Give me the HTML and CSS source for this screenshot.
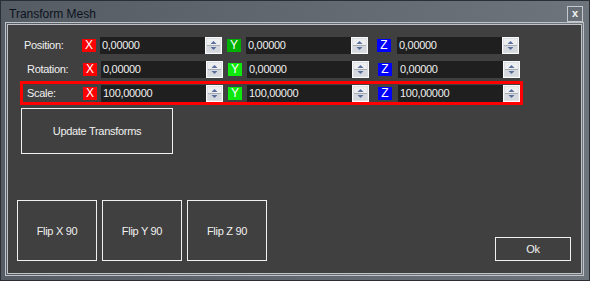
FILE: index.html
```html
<!DOCTYPE html>
<html lang="en">
<head>
    <meta charset="UTF-8">
    <title>Transform Mesh</title>
    <link rel="stylesheet" href="styles.css">
</head>
<body>
    <svg width="0" height="0" class="defs">
        <symbol id="spin" viewBox="0 0 17 17">
            <rect x="0.5" y="0.5" width="16" height="16" fill="#dcdfe3" stroke="#fafafa"/>
            <rect x="2" y="2" width="13" height="6" fill="#eceef0"/>
            <rect x="2" y="9" width="13" height="6" fill="#d5d9de"/>
            <line x1="2" y1="8.5" x2="15" y2="8.5" stroke="#a9aeb5"/>
            <path d="M8.5 4 L11.5 7 H5.5 Z" fill="#5b6f9f"/>
            <path d="M5.5 10 H11.5 L8.5 13 Z" fill="#5b6f9f"/>
        </symbol>
    </svg>
    <div class="window">
        <div class="titlebar">
            <span class="title">Transform Mesh</span>
            <span class="close">x</span>
        </div>
        <div class="frame">
            <div class="client">
                <div class="rows">
                    <div class="row first">
                        <span class="label">Position:</span>
                        <span class="axis x">X</span>
                        <div class="field">0,00000</div>
                        <svg class="spin"><use href="#spin"/></svg>
                        <span class="axis y">Y</span>
                        <div class="field">0,00000</div>
                        <svg class="spin"><use href="#spin"/></svg>
                        <span class="axis z">Z</span>
                        <div class="field">0,00000</div>
                        <svg class="spin"><use href="#spin"/></svg>
                    </div>
                    <div class="row">
                        <span class="label">Rotation:</span>
                        <span class="axis x">X</span>
                        <div class="field">0,00000</div>
                        <svg class="spin"><use href="#spin"/></svg>
                        <span class="axis y">Y</span>
                        <div class="field">0,00000</div>
                        <svg class="spin"><use href="#spin"/></svg>
                        <span class="axis z">Z</span>
                        <div class="field">0,00000</div>
                        <svg class="spin"><use href="#spin"/></svg>
                    </div>
                    <div class="row selected">
                        <span class="label">Scale:</span>
                        <span class="axis x">X</span>
                        <div class="field">100,00000</div>
                        <svg class="spin"><use href="#spin"/></svg>
                        <span class="axis y">Y</span>
                        <div class="field">100,00000</div>
                        <svg class="spin"><use href="#spin"/></svg>
                        <span class="axis z">Z</span>
                        <div class="field">100,00000</div>
                        <svg class="spin"><use href="#spin"/></svg>
                    </div>
                </div>
                <button class="btn update">Update Transforms</button>
                <div class="bottom">
                    <div class="flips">
                        <button class="btn flip">Flip X 90</button>
                        <button class="btn flip">Flip Y 90</button>
                        <button class="btn flip">Flip Z 90</button>
                    </div>
                    <button class="btn ok">Ok</button>
                </div>
            </div>
        </div>
    </div>
</body>
</html>
```

FILE: styles.css
```css
body {
    margin: 0;
    font-family: "Liberation Sans", Arial, sans-serif;
}
.defs {
    position: absolute;
}
.window {
    width: 590px;
    height: 281px;
    box-sizing: border-box;
    border: 1px solid #2b2f33;
    background: linear-gradient(to right, #555c63, #6e747b);
    padding: 0 5px 4px 4px;
    display: flex;
    flex-direction: column;
}
.titlebar {
    height: 21px;
    display: flex;
    justify-content: space-between;
    align-items: flex-start;
}
.title {
    font-size: 12px;
    color: #0c1220;
    padding: 6px 0 0 4px;
}
.close {
    width: 14px;
    height: 14px;
    margin: 5px 1px 0 0;
    border: 1px solid #c5c9cd;
    background: #686e75;
    color: #f4f4f4;
    font-size: 11px;
    font-weight: bold;
    text-align: center;
    line-height: 12px;
}
.frame {
    flex: 1;
    border: 1px solid #bfc3c7;
    padding: 1px;
    display: flex;
}
.client {
    flex: 1;
    border: 1px solid #bfc3c7;
    background: #404040;
    display: flex;
    flex-direction: column;
}
.rows {
    padding: 8px 0 0 12px;
}
.row {
    display: flex;
    align-items: center;
    width: 503px;
    height: 24px;
    box-sizing: border-box;
    border: 3px solid transparent;
}
.row.selected {
    border-color: #ff0000;
}
.label {
    width: 60px;
    padding-left: 4px;
    box-sizing: border-box;
    color: #f0f0f0;
    font-size: 11px;
    letter-spacing: -0.3px;
}
.first .label {
    width: 59px;
    padding-left: 1px;
}
.axis {
    width: 14px;
    height: 13px;
    color: #ffffff;
    font-size: 12px;
    line-height: 13px;
    text-align: center;
}
.axis.x {
    background: #ff0000;
}
.axis.y {
    background: #0ee80e;
    margin-left: 5px;
}
.first .axis.y {
    background: #00b000;
}
.axis.z {
    background: #0000ff;
    margin-left: 9px;
}
.field {
    width: 105px;
    height: 17px;
    margin-left: 4px;
    padding-left: 2px;
    box-sizing: border-box;
    background: #1f1f1f;
    color: #f0f0f0;
    font-size: 11px;
    line-height: 17px;
    letter-spacing: -0.3px;
}
.axis.y + .field {
    margin-left: 5px;
}
.axis.z + .field {
    margin-left: 6px;
}
.spin {
    width: 17px;
    height: 17px;
}
.btn {
    background: transparent;
    border: 1px solid #f0f0f0;
    color: #f0f0f0;
    font-family: "Liberation Sans", Arial, sans-serif;
    font-size: 11px;
    letter-spacing: -0.3px;
    padding: 0;
    box-sizing: border-box;
}
.update {
    width: 152px;
    height: 46px;
    margin: 3px 0 0 13px;
}
.bottom {
    margin-top: auto;
    display: flex;
    justify-content: space-between;
    align-items: flex-end;
    padding: 0 10px 12px 9px;
}
.flips {
    display: flex;
    gap: 5px;
}
.flip {
    width: 80px;
    height: 61px;
}
.ok {
    width: 76px;
    height: 24px;
}
```
